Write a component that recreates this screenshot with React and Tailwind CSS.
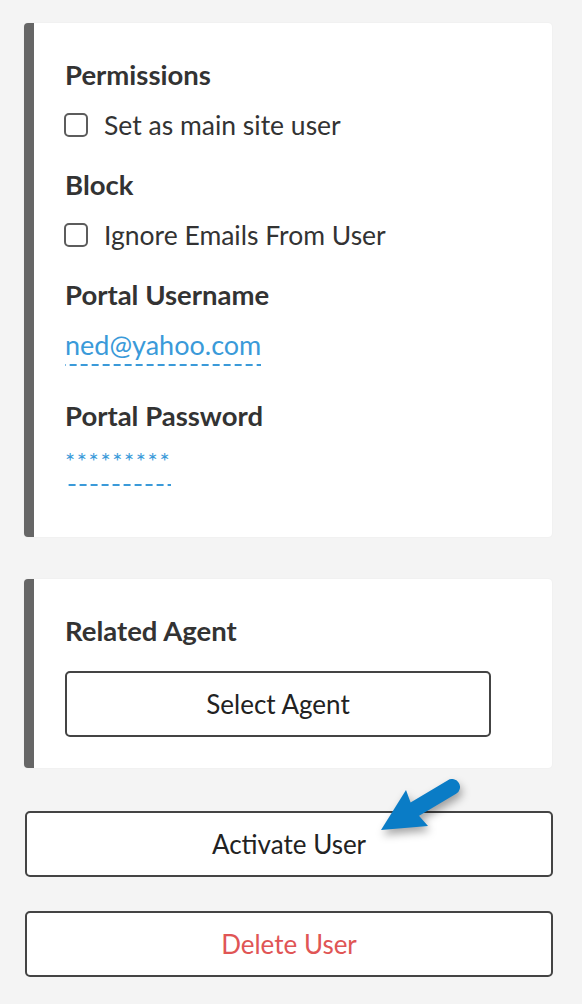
import React from "react";

const font = { fontFamily: '"Lato", "Liberation Sans", sans-serif' };

function Checkbox() {
  return <span className="inline-block w-[24px] h-[24px] border-2 border-[#5c5c5c] rounded-[5px] bg-white shrink-0" />;
}

function Arrow() {
  return (
    <svg className="absolute left-[368px] top-[772px] drop-shadow-[2px_5px_4px_rgba(0,0,0,0.35)]" width="100" height="70" viewBox="368 772 100 70">
      <line x1="452" y1="787" x2="410" y2="812" stroke="#0a7cc6" strokeWidth="16" strokeLinecap="round" />
      <polygon points="381,830 406,790 413,809 428,826" fill="#0a7cc6" />
    </svg>
  );
}

export default function App() {
  return (
    <div className="relative min-h-[1004px] bg-[#f4f4f4] pt-[23px] text-[#333]" style={font}>
      <div className="ml-[24px] w-[528px]">
        <div className="bg-white rounded-[4px] border-l-[10px] border-[#666] pl-[30px] pt-[37px] pb-[51px] shadow-[0_0_2px_rgba(0,0,0,0.05)]">
          <div className="pl-px text-[27.5px] font-bold leading-[30px]">Permissions</div>
          <div className="mt-[20px] flex items-center gap-[16px] leading-[30px] text-[26.5px]">
            <Checkbox />
            <span>Set as main site user</span>
          </div>
          <div className="pl-px mt-[30px] text-[27.5px] font-bold leading-[30px]">Block</div>
          <div className="mt-[20px] flex items-center gap-[16px] leading-[30px] text-[26.5px]">
            <Checkbox />
            <span>Ignore Emails From User</span>
          </div>
          <div className="pl-px mt-[30px] text-[27.5px] font-bold leading-[30px]">Portal Username</div>
          <div className="pl-px mt-[20px]">
            <span className="inline-block text-[27px] leading-[30px] text-[#3a9ad9] pb-[6px] bg-[linear-gradient(to_right,#3a9ad9_64%,transparent_0)] bg-[length:11px_2px] bg-repeat-x bg-bottom">ned@yahoo.com</span>
          </div>
          <div className="pl-px mt-[35px] text-[27.5px] font-bold leading-[30px]">Portal Password</div>
          <div className="pl-px mt-[15px]">
            <span className="inline-block text-[24px] leading-[30px] tracking-[1.6px] text-[#3a9ad9] pb-[10px] bg-[linear-gradient(to_right,#3a9ad9_64%,transparent_0)] bg-[length:11px_2px] bg-repeat-x bg-bottom">*********</span>
          </div>
        </div>

        <div className="mt-[42px] bg-white rounded-[4px] border-l-[10px] border-[#666] pl-[31px] pt-[37px] pb-[31px] shadow-[0_0_2px_rgba(0,0,0,0.05)]">
          <div className="text-[27.5px] font-bold leading-[30px]">Related Agent</div>
          <button className="mt-[25px] w-[426px] h-[66px] border-2 border-[#444] rounded-[5px] bg-white text-[26px] text-[#222] flex items-center justify-center">
            Select Agent
          </button>
        </div>

        <button className="mt-[43px] ml-px w-[528px] h-[66px] border-2 border-[#444] rounded-[5px] bg-white text-[26px] text-[#222] flex items-center justify-center">
          Activate User
        </button>
        <button className="mt-[34px] ml-px w-[528px] h-[66px] border-2 border-[#444] rounded-[5px] bg-white text-[26px] text-[#e05555] flex items-center justify-center">
          Delete User
        </button>
      </div>
      <Arrow />
    </div>
  );
}
